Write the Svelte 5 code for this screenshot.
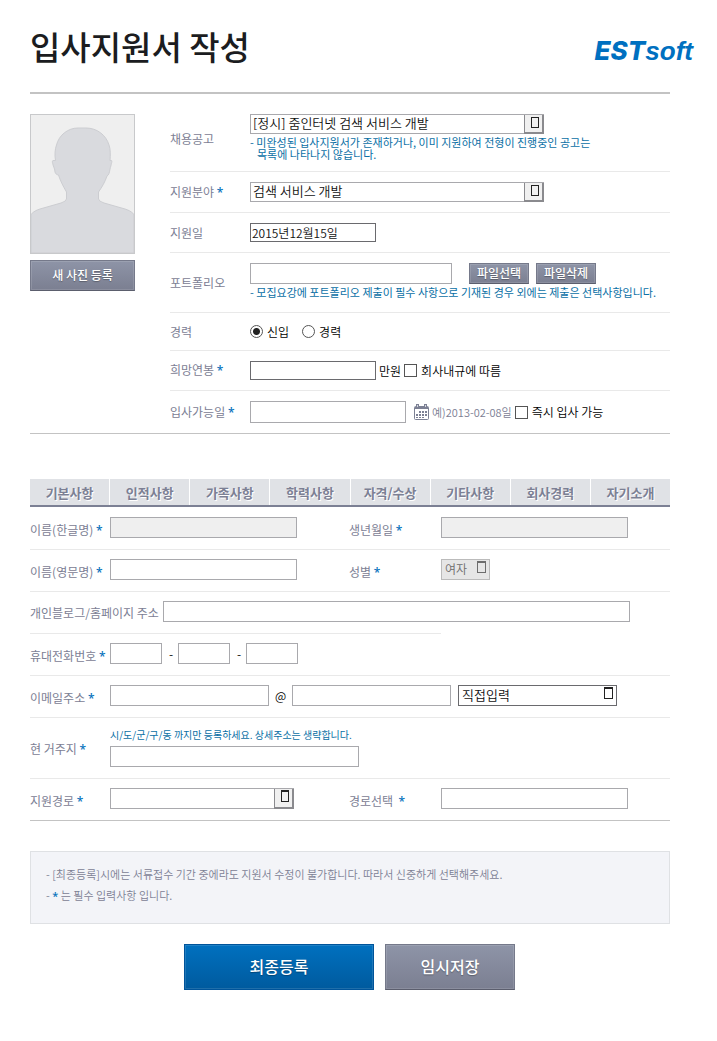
<script lang="ts">
  const tabs = ['기본사항', '인적사항', '가족사항', '학력사항', '자격/수상', '기타사항', '회사경력', '자기소개'];

  let career = 'new';
  let applyDate = '2015년12월15일';
</script>

<div class="page">
  <header class="head">
    <h1>입사지원서 작성</h1>
    <a class="logo" href="#home" aria-label="ESTsoft"><b>EST</b><span>soft</span></a>
  </header>

  <form class="body" on:submit|preventDefault>
    <section class="apply">
      <div class="photo">
        <div class="frame">
          <svg viewBox="0 0 103 138" aria-hidden="true">
            <path
              d="M0 99.5C3 96 6 95 9 94L30 88Q35 86.5 35.5 84V77C32 71 29 65 27.5 60C24 59.5 24 57 23.5 54C22 50 20.5 46 22 45.5H24.5C23.5 40 24 34 25.5 30C28 20 37 13 47 13H55C66 13 75 20 78 30C79.5 34 79.5 40 79 45.5H80.5C81.5 46 80 50 79 54C78.5 57 78 60 76 61C74 67 71 72 67.5 77V84Q68 86.5 73 88L94 94C97 95 100 96 103 99.5V138H0Z"
              fill="#d9dade" stroke="#cccdd1" stroke-width="1"
            />
          </svg>
        </div>
        <button type="button" class="btn photo-btn">새 사진 등록</button>
      </div>

      <div class="rows">
        <div class="row">
          <label for="notice">채용공고</label>
          <div class="field first">
            <span class="select wide boxed">
              <select id="notice"><option>[정시] 줌인터넷 검색 서비스 개발</option></select>
              <i></i>
            </span>
            <p class="hint">- 미완성된 입사지원서가 존재하거나, 이미 지원하여 전형이 진행중인 공고는<br /><span class="indent">목록에 나타나지 않습니다.</span></p>
          </div>
        </div>
        <div class="row">
          <label for="part">지원분야 <em>*</em></label>
          <div class="field">
            <span class="select wide boxed">
              <select id="part"><option>검색 서비스 개발</option></select>
              <i></i>
            </span>
          </div>
        </div>
        <div class="row">
          <label for="date">지원일</label>
          <div class="field">
            <input id="date" class="short dark" type="text" bind:value={applyDate} />
          </div>
        </div>
        <div class="row">
          <label for="portfolio">포트폴리오</label>
          <div class="field folio">
            <div class="inline">
              <input id="portfolio" class="file" type="text" />
              <button type="button" class="btn small">파일선택</button>
              <button type="button" class="btn small">파일삭제</button>
            </div>
            <p class="hint">- 모집요강에 포트폴리오 제출이 필수 사항으로 기재된 경우 외에는 제출은 선택사항입니다.</p>
          </div>
        </div>
        <div class="row" role="radiogroup" aria-labelledby="career">
          <span class="label" id="career">경력</span>
          <div class="field career inline">
            <label class="check"><input type="radio" bind:group={career} value="new" />신입</label>
            <label class="check"><input type="radio" bind:group={career} value="exp" />경력</label>
          </div>
        </div>
        <div class="row">
          <label for="salary">희망연봉 <em>*</em></label>
          <div class="field inline">
            <input id="salary" class="short dark" type="text" />
            <span class="unit">만원</span>
            <label class="check"><input type="checkbox" />회사내규에 따름</label>
          </div>
        </div>
        <div class="row">
          <label for="start">입사가능일 <em>*</em></label>
          <div class="field inline">
            <input id="start" class="start" type="text" />
            <svg class="cal" viewBox="0 0 15 16" aria-hidden="true">
              <rect x="0.5" y="2.5" width="14" height="13" rx="1" fill="#fff" stroke="#7c8094" />
              <path d="M1 3H14V5H1Z" fill="#7c8094" />
              <path d="M2 0H5V4H2ZM10 0H13V4H10Z" fill="#7c8094" />
              <path d="M3 1H4V3H3ZM11 1H12V3H11Z" fill="#d5d7de" />
              <path d="M5 7H7V9H5ZM8 7H10V9H8ZM11 7H13V9H11ZM2 10H4V12H2ZM5 10H7V12H5ZM8 10H10V12H8ZM11 10H13V12H11ZM2 13H4V14H2ZM5 13H7V14H5ZM8 13H10V14H8Z" fill="#7c8094" />
            </svg>
            <span class="example">예)2013-02-08일</span>
            <label class="check"><input type="checkbox" />즉시 입사 가능</label>
          </div>
        </div>
      </div>
    </section>

    <nav class="tabs">
      {#each tabs as tab}
        <a href="#{tab}">{tab}</a>
      {/each}
    </nav>

    <section class="basic">
      <div class="line">
        <label for="name">이름(한글명) <em>*</em></label>
        <div class="field"><input id="name" class="name" type="text" disabled /></div>
        <label for="birth">생년월일 <em>*</em></label>
        <div class="field"><input id="birth" class="name" type="text" disabled /></div>
      </div>
      <div class="line">
        <label for="ename">이름(영문명) <em>*</em></label>
        <div class="field"><input id="ename" class="name" type="text" /></div>
        <label for="gender">성별 <em>*</em></label>
        <div class="field">
          <span class="select gender">
            <select id="gender" disabled><option>여자</option></select>
            <i></i>
          </span>
        </div>
      </div>
      <div class="line partial">
        <div class="field span inline">
          <label for="blog">개인블로그/홈페이지 주소</label>
          <input id="blog" class="blog" type="text" />
        </div>
      </div>
      <div class="line">
        <label for="phone">휴대전화번호 <em>*</em></label>
        <div class="field rest inline">
          <input id="phone" class="phone" type="text" />
          <span class="dash">-</span>
          <input class="phone" type="text" aria-label="휴대전화번호" />
          <span class="dash">-</span>
          <input class="phone" type="text" aria-label="휴대전화번호" />
        </div>
      </div>
      <div class="line">
        <label for="email">이메일주소 <em>*</em></label>
        <div class="field rest inline">
          <input id="email" class="email" type="text" />
          <span class="at">@</span>
          <input class="email" type="text" aria-label="이메일주소" />
          <span class="select domain">
            <select aria-label="이메일주소"><option>직접입력</option></select>
            <i></i>
          </span>
        </div>
      </div>
      <div class="line">
        <label for="addr">현 거주지 <em>*</em></label>
        <div class="field rest addr">
          <p class="hint">시/도/군/구/동 까지만 등록하세요. 상세주소는 생략합니다.</p>
          <input id="addr" class="address" type="text" />
        </div>
      </div>
      <div class="line last">
        <label for="route">지원경로 <em>*</em></label>
        <div class="field">
          <span class="select route boxed">
            <select id="route"><option></option></select>
            <i></i>
          </span>
        </div>
        <label for="route2">경로선택 &nbsp;<em>*</em></label>
        <div class="field"><input id="route2" class="name" type="text" /></div>
      </div>
    </section>

    <div class="guide">
      <p>- [최종등록]시에는 서류접수 기간 중에라도 지원서 수정이 불가합니다. 따라서 신중하게 선택해주세요.</p>
      <p>- <em>*</em> 는 필수 입력사항 입니다.</p>
    </div>

    <div class="actions">
      <button type="submit" class="btn big primary">최종등록</button>
      <button type="button" class="btn big">임시저장</button>
    </div>
  </form>
</div>

<style>
  :global(body) {
    background: #fff;
  }
  .page, .page *, .boxed::after {
    box-sizing: border-box;
  }
  .page {
    padding: 0 24px 51px 30px;
    font-family: "Noto Sans CJK KR", sans-serif;
    font-size: 12px;
    font-weight: 350;
    line-height: 16px;
    color: #000;
  }
  h1, p {
    margin: 0;
  }
  em {
    font-family: "Open Sans", sans-serif;
    font-style: normal;
    font-weight: 600;
    color: #0a74bd;
  }

  /* Header */
  .head {
    display: flex;
    justify-content: space-between;
    align-items: center;
    height: 92px;
  }
  h1 {
    font-size: 33px;
    line-height: 40px;
    font-weight: 500;
    color: #1b1c20;
  }
  .logo {
    padding-top: 8px;
    font-size: 26px;
    line-height: 32px;
    font-style: italic;
    color: #0070c0;
    text-decoration: none;
    white-space: nowrap;
  }
  .logo b {
    font-family: Inter, sans-serif;
    font-weight: 800;
  }
  .logo span {
    font-family: "Liberation Sans", sans-serif;
    font-weight: 700;
  }

  .body {
    margin-right: 23px;
    border-top: 2px solid #c3c3c3;
  }

  /* Photo and application info */
  .apply {
    display: flex;
    gap: 35px;
    padding-top: 12px;
    border-bottom: 1px solid #c3c3c3;
  }
  .photo {
    flex: none;
    width: 105px;
    padding-top: 8px;
  }
  .frame {
    height: 140px;
    border: 1px solid #c8c9cb;
    background: #efefef;
    overflow: hidden;
  }
  .frame svg {
    display: block;
    width: 103px;
    height: 138px;
  }
  .rows {
    flex: 1;
    min-width: 0;
  }
  .row {
    display: grid;
    grid-template-columns: 80px 1fr;
    align-items: center;
    border-bottom: 1px solid #e9e9e9;
  }
  .row:last-child { border-bottom: 0; }
  .row > label, .row > .label, .line label {
    font-weight: 400;
    color: #7c8094;
    white-space: nowrap;
  }
  .line label { padding-top: 3px; }
  .field { padding: 10px 0; }
  .row .field { min-height: 37px; }
  .row .field.first { padding: 8px 0 11px; }
  .row .field.folio { padding-bottom: 14px; }
  .inline {
    display: flex;
    align-items: center;
  }
  .hint {
    margin-top: 2px;
    font-size: 11px;
    font-weight: 400;
    line-height: 12px;
    color: #0a6fa5;
    white-space: nowrap;
  }
  .indent { padding-left: 7px; }

  /* Text boxes and drop-downs */
  input[type="text"], select {
    display: block;
    width: 100%;
    height: 21px;
    margin: 0;
    padding: 0 1px;
    border: 1px solid #a9a9ad;
    border-radius: 0;
    background: #fff;
    font: inherit;
    color: #111;
    appearance: none;
  }
  input[type="text"]:disabled {
    background: #efefef;
  }
  input[type="text"].dark { border-color: #6a6a6e; height: 19px; }
  input.short { width: 126px; }
  input.file { width: 202px; margin-right: 17px; }
  input[type="text"].start { width: 156px; height: 22px; }
  input.name { width: 187px; }
  input.blog { flex: 1; margin: 0 40px 0 4px; }
  input.phone { width: 52px; }
  input.email { width: 159px; }
  input.address { width: 249px; }

  .select {
    position: relative;
    display: block;
  }
  .select select {
    height: 19px;
    padding: 0 2px 1px;
    font-size: 13px;
    line-height: 16px;
    opacity: 1;
  }
  .row .select select { height: 20px; padding-bottom: 2px; }
  .select i {
    position: absolute;
    top: 2px;
    right: 4px;
    width: 9px;
    height: 12px;
    border: 1px solid #222;
    border-top-width: 2px;
    pointer-events: none;
  }
  .boxed::after {
    content: "";
    position: absolute;
    top: 1px;
    right: 0;
    bottom: 0;
    width: 20px;
    border: solid #8a8a8e;
    border-width: 0 2px 2px 1px;
    background: #f0f0f0;
    pointer-events: none;
  }
  .boxed i {
    z-index: 1;
    top: 3px;
    right: 5px;
    width: 8px;
    height: 11px;
    border-top-width: 1px;
  }
  .wide { width: 294px; }
  .gender { width: 49px; }
  .gender select {
    height: 21px;
    padding-left: 3px;
    background: #e6e6e6;
    border-color: #bbb;
    color: #6d6d6d;
    font-size: 12px;
  }
  .gender i { border-color: #6d6d6d; }
  .domain { width: 159px; margin-left: 7px; }
  .domain select { height: 21px; padding-left: 3px; border-color: #6a6a6e; }
  .route { width: 184px; }
  .route select { height: 21px; }
  .route i { top: 2px; height: 12px; border-top-width: 2px; }

  /* Radios and tick boxes */
  .row .check {
    display: flex;
    align-items: center;
    gap: 4px;
    color: #000;
    white-space: nowrap;
  }
  .check input {
    width: 13px;
    height: 13px;
    margin: 0;
    border: 1px solid #555;
    background: #fff;
    appearance: none;
  }
  .check input[type="radio"] { border-radius: 50%; }
  .check input[type="radio"]:checked {
    background: radial-gradient(circle, #222 3px, #fff 4px);
  }
  .check input[type="checkbox"]:checked { background: #555; }
  .career { gap: 13px; }
  .unit { margin: 0 3px; }
  .cal {
    flex: none;
    width: 15px;
    height: 16px;
    margin: 0 3px 0 8px;
  }
  .example {
    margin-right: 3px;
    font-size: 11px;
    color: #7c8094;
  }

  /* Buttons */
  .btn {
    padding: 0 0 2px;
    border: 1px solid #75798a;
    border-bottom-color: #5b5e6d;
    background: linear-gradient(#8e94a7, #7b7f91);
    box-shadow: inset 0 0 0 1px rgba(255, 255, 255, 0.12);
    font: inherit;
    font-weight: 500;
    color: #fff;
    text-shadow: 0 1px 1px rgba(0, 0, 0, 0.3);
    cursor: pointer;
  }
  .photo-btn {
    display: block;
    width: 100%;
    height: 31px;
    margin-top: 6px;
  }
  .small { width: 60px; height: 21px; }
  .small + .small { margin-left: 7px; }
  .big { width: 130px; height: 46px; font-size: 16px; }
  .primary {
    width: 190px;
    border-color: #00549a;
    background: linear-gradient(#0070bf, #005a9e);
  }

  /* Section tabs */
  .tabs {
    display: flex;
    gap: 1px;
    margin-top: 45px;
    border-bottom: 2px solid #7c8094;
  }
  .tabs a {
    flex: 1;
    height: 26px;
    background: #e0e2e6;
    font-size: 13px;
    line-height: 28px;
    font-weight: 700;
    text-align: center;
    text-decoration: none;
    text-shadow: 1px 1px 0 #fff;
    color: #7c8094;
  }

  /* Basic info */
  .basic {
    padding-top: 1px;
    border-bottom: 1px solid #c3c3c3;
  }
  .line {
    display: grid;
    grid-template-columns: 80px 239px 92px 1fr;
    align-items: center;
  }
  .line::after {
    content: "";
    grid-column: 1 / -1;
    height: 1px;
    background: #e9e9e9;
  }
  .line.partial::after { grid-column: 1 / 4; }
  .line.last::after { display: none; }
  .line .field { padding: 9px 0 11px; }
  .line .rest { grid-column: 2 / -1; }
  .line .span { grid-column: 1 / -1; }
  .line .addr { padding-top: 11px; }
  .addr .hint { margin: 0 0 5px; font-size: 10px; }
  .dash { width: 16px; padding-left: 2px; text-align: center; }
  .at { width: 23px; text-align: center; }

  /* Guide box and submit */
  .guide {
    margin-top: 30px;
    padding: 12px 15px 17px;
    border: 1px solid #dfe1e4;
    background: #f3f4f8;
    font-size: 11px;
    line-height: 21px;
    color: #7c8094;
  }
  .actions {
    display: flex;
    justify-content: center;
    gap: 11px;
    margin-top: 20px;
    padding-right: 1px;
  }
</style>
